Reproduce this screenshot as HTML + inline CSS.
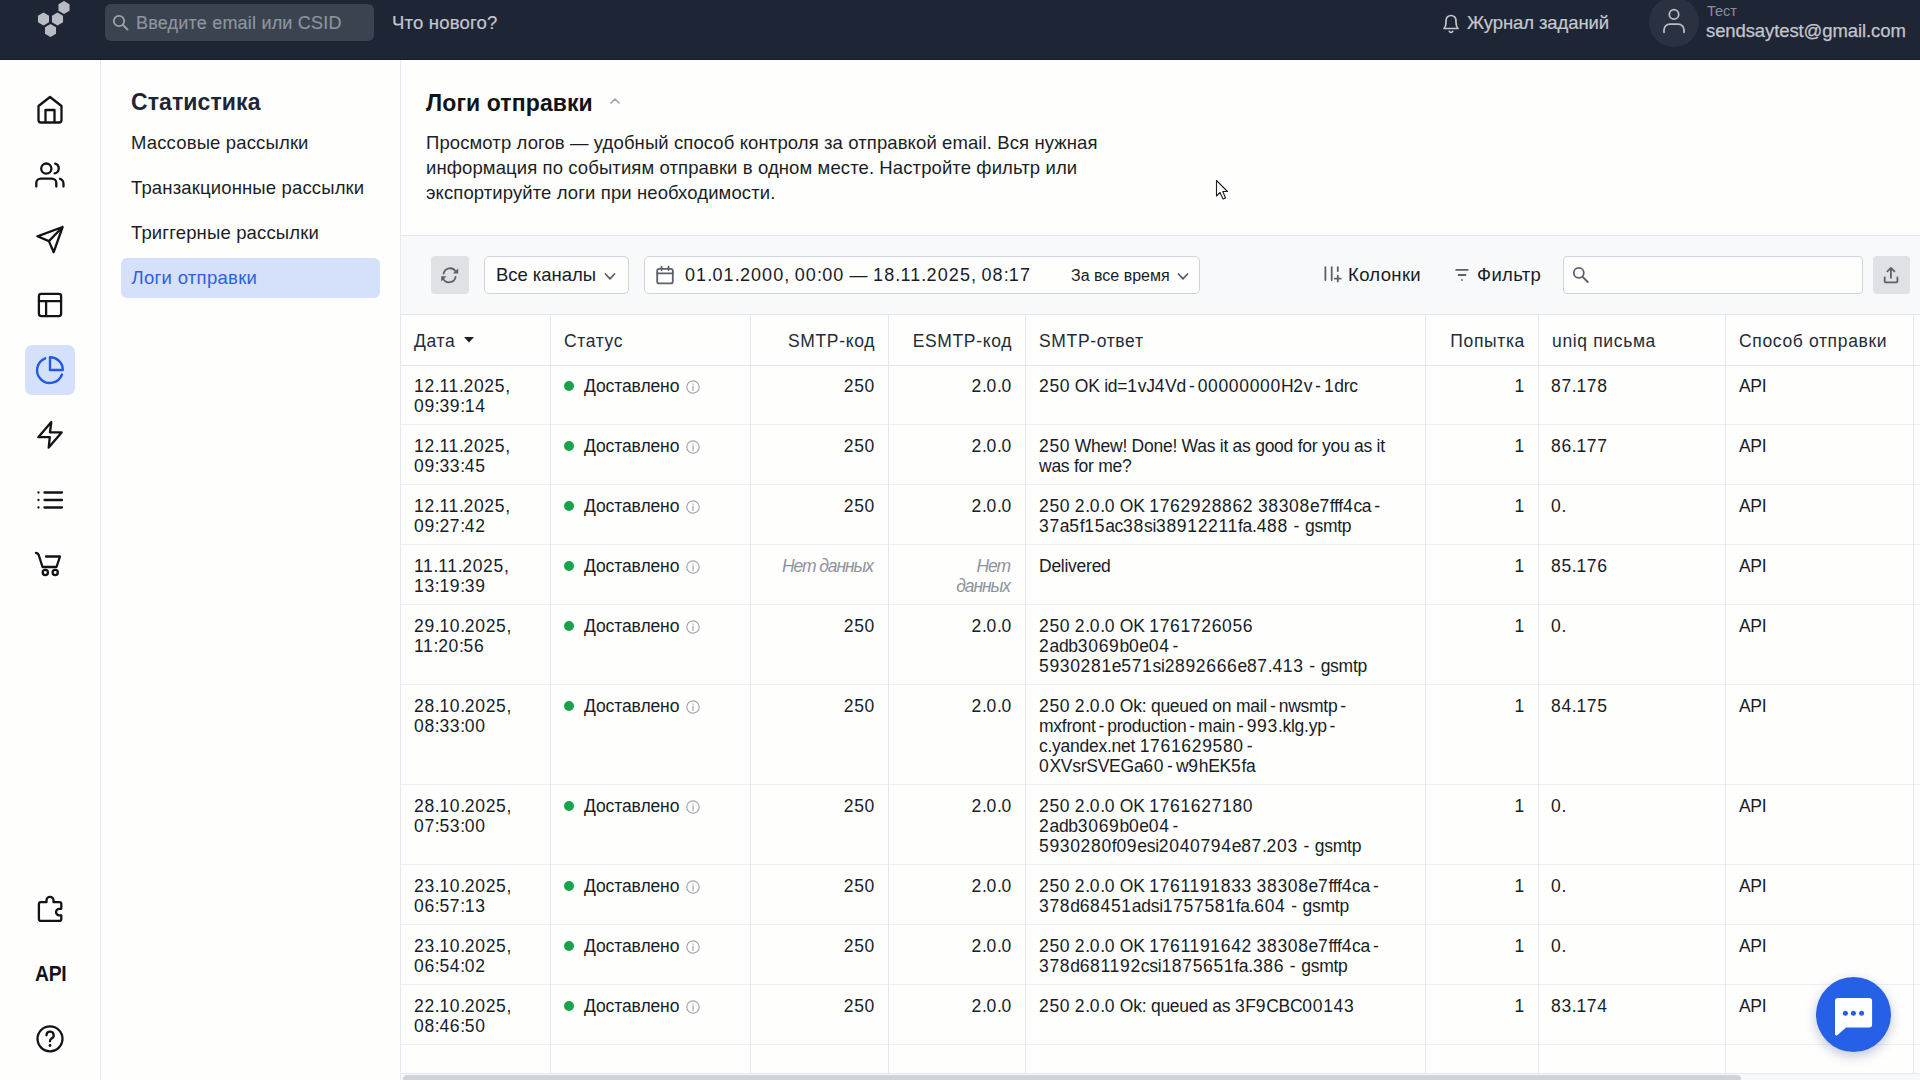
<!DOCTYPE html><html><head><meta charset="utf-8"><style>
*{box-sizing:border-box;margin:0;padding:0}
html,body{width:1920px;height:1080px;overflow:hidden;background:#fefefd;font-family:"Liberation Sans", sans-serif;color:#1b1e25}
.a{position:absolute}
.t{position:absolute;white-space:nowrap}
#top{left:0;top:0;width:1920px;height:60px;background:#1e2535}
#top .bl{left:0;top:59px;width:1920px;height:1px;background:#141b2b}
#srch{left:105px;top:4px;width:269px;height:37px;background:#3a4350;border-radius:6px}
.tb{font-size:18.5px;color:#c5c8ce;letter-spacing:0.2px;-webkit-text-stroke:0.2px currentColor}
#side{left:0;top:60px;width:101px;height:1020px;border-right:1px solid #e8e9f0}
#sub{left:101px;top:60px;width:300px;height:1020px;border-right:1px solid #e8e9f0}
.sm{font-size:18.5px;color:#1b1e25;letter-spacing:0.15px}
#band{left:401px;top:235px;width:1519px;height:80px;background:#f8f9fb;border-top:1px solid #e6e7ee;border-bottom:1px solid #e6e7ee}
.box{position:absolute;background:#fefefd;border:1px solid #cfd3da;border-radius:5px}
.td{font-size:17.5px;letter-spacing:0.35px;line-height:20px;color:#181c25}
.dt{letter-spacing:-0.26px}
.d{letter-spacing:0.67px}
.hy{margin:0 2.95px;letter-spacing:0}
.dtr{letter-spacing:0.2px}
.dtr .d{letter-spacing:1.1px}
.th{color:#222c38;letter-spacing:0.65px}
.r{text-align:right}
.vl{position:absolute;width:1px;background:#e6e7ee}
.hl{position:absolute;height:1px;background:#eeeff3}
</style></head><body>
<div id="top" class="a"><div class="a bl"></div>
<svg class="a" style="left:0;top:0" width="120" height="60" viewBox="0 0 120 60">
<path d="M64.00,13.90 L58.46,10.70 L58.46,4.30 L64.00,1.10 L69.54,4.30 L69.54,10.70Z" fill="#b9bcc3"/>
<path d="M43.50,25.40 L37.96,22.20 L37.96,15.80 L43.50,12.60 L49.04,15.80 L49.04,22.20Z" fill="#b9bcc3"/>
<path d="M57.50,25.40 L51.96,22.20 L51.96,15.80 L57.50,12.60 L63.04,15.80 L63.04,22.20Z" fill="#b9bcc3"/>
<path d="M50.50,36.90 L44.96,33.70 L44.96,27.30 L50.50,24.10 L56.04,27.30 L56.04,33.70Z" fill="#b9bcc3"/>
</svg>
<div id="srch" class="a"></div>
<svg class="a" style="left:111px;top:13px" width="20" height="20" viewBox="0 0 20 20"><circle cx="8" cy="8" r="5.2" fill="none" stroke="#9ba1aa" stroke-width="1.8"/><path d="M12 12L16.5 16.5" stroke="#9ba1aa" stroke-width="1.8" stroke-linecap="round"/></svg>
<div class="t tb" style="left:136px;top:12.5px;color:#8e939c;font-size:18px">Введите email или CSID</div>
<div class="t tb" style="left:392px;top:12.2px">Что нового?</div>
<svg class="a" style="left:1440px;top:11px" width="22" height="24" viewBox="0 0 22 24"><path d="M4 17.5 H18 C16.2 15.8 16 14 16 11.5 V9.5 A5 5 0 0 0 6 9.5 V11.5 C6 14 5.8 15.8 4 17.5Z" fill="none" stroke="#c4c7cd" stroke-width="1.7" stroke-linejoin="round"/><path d="M9.3 20.3 A1.8 1.8 0 0 0 12.7 20.3" fill="none" stroke="#c4c7cd" stroke-width="1.7" stroke-linecap="round"/></svg>
<div class="t tb" style="left:1467px;top:12px;letter-spacing:-0.1px">Журнал заданий</div>
<div class="a" style="left:1649px;top:-3px;width:50px;height:50px;border-radius:50%;background:#2a3241"></div>
<svg class="a" style="left:1660px;top:6px" width="28" height="30" viewBox="0 0 28 30"><circle cx="14" cy="8.4" r="4.7" fill="none" stroke="#babec6" stroke-width="1.75"/><path d="M4 26.3 V24 A5.8 5.8 0 0 1 9.8 18.2 H18.2 A5.8 5.8 0 0 1 24 24 V26.3" fill="none" stroke="#babec6" stroke-width="1.75" stroke-linecap="round"/></svg>
<div class="t" style="left:1707px;top:3px;font-size:14.5px;color:#8a8f99">Тест</div>
<div class="t" style="left:1706px;top:19.5px;font-size:18.5px;color:#c3c6cd;letter-spacing:-0.1px;-webkit-text-stroke:0.25px currentColor">sendsaytest@gmail.com</div>
</div>
<div id="side" class="a"></div>
<div class="a" style="left:25px;top:345px;width:50px;height:50px;border-radius:7px;background:#d5e1fb"></div>
<svg class="a" style="left:0;top:0" width="100" height="1080" viewBox="0 0 100 1080">
<path fill="none" stroke="#111317" stroke-width="2.3" stroke-linecap="round" stroke-linejoin="round" d="M38.5 106 L50 97 L61.5 106 V120 A2.5 2.5 0 0 1 59 122.5 H41 A2.5 2.5 0 0 1 38.5 120 Z M45.5 122.5 V110 H54.5 V122.5"/>
<circle fill="none" stroke="#111317" stroke-width="2.3" stroke-linecap="round" stroke-linejoin="round" cx="46.3" cy="168.6" r="5.1"/>
<path fill="none" stroke="#111317" stroke-width="2.3" stroke-linecap="round" stroke-linejoin="round" d="M36.3 186.5 V183 A4.5 4.5 0 0 1 40.8 178.6 H51.8 A4.5 4.5 0 0 1 56.3 183 V186.5"/>
<path fill="none" stroke="#111317" stroke-width="2.3" stroke-linecap="round" stroke-linejoin="round" d="M55.2 163.7 A5 5 0 0 1 54.6 173.4"/>
<path fill="none" stroke="#111317" stroke-width="2.3" stroke-linecap="round" stroke-linejoin="round" d="M63.5 186.5 V184 A5.5 5.5 0 0 0 60 178.8"/>
<path fill="none" stroke="#111317" stroke-width="2.3" stroke-linecap="round" stroke-linejoin="round" d="M37.4 236.3 L62.6 227 L53.7 252.2 L48.9 241.1 Z M48.9 241.1 L62.6 227"/>
<rect fill="none" stroke="#111317" stroke-width="2.3" stroke-linecap="round" stroke-linejoin="round" x="38.9" y="293.9" width="22.2" height="22.2" rx="2.3"/>
<path fill="none" stroke="#111317" stroke-width="2.3" stroke-linecap="round" stroke-linejoin="round" d="M38.9 301.1 H61.1 M46.1 301.1 V316.1"/>
<path fill="none" stroke="#1f5ae6" stroke-width="2.4" stroke-linecap="round" stroke-linejoin="round" d="M45.2 358.3 A12.8 12.8 0 1 0 61.9 374.6"/>
<path fill="none" stroke="#1f5ae6" stroke-width="2.4" stroke-linecap="round" stroke-linejoin="round" stroke-linejoin="miter" d="M50 357.2 A12.8 12.8 0 0 1 62.8 370 H50 Z"/>
<path fill="none" stroke="#111317" stroke-width="2.3" stroke-linecap="round" stroke-linejoin="round" d="M51.3 422 L38.3 437.2 H49.8 L48.7 447.6 L61.6 432.4 H50 Z"/>
<path fill="none" stroke="#111317" stroke-width="2.3" stroke-linecap="round" stroke-linejoin="round" d="M44.5 492.5 H62 M44.5 500 H62 M44.5 507.5 H62 M38.5 492.5 V492.6 M38.5 500 V500.1 M38.5 507.5 V507.6"/>
<path fill="none" stroke="#111317" stroke-width="2.3" stroke-linecap="round" stroke-linejoin="round" d="M36 553 Q38 553 38.7 555 L42.5 567 H56.5 L60 556.5 H46"/>
<circle fill="none" stroke="#111317" stroke-width="2.3" stroke-linecap="round" stroke-linejoin="round" cx="45.3" cy="572.5" r="2.6"/><circle fill="none" stroke="#111317" stroke-width="2.3" stroke-linecap="round" stroke-linejoin="round" cx="55.2" cy="572.5" r="2.6"/>
<path fill="none" stroke="#111317" stroke-width="2.3" stroke-linecap="round" stroke-linejoin="round" d="M38.9 904 A1.8 1.8 0 0 1 40.7 902.2 H46.5 V900.3 A3.5 3.5 0 0 1 53.5 900.3 V902.2 H59.5 A1.8 1.8 0 0 1 61.3 904 V908.8 H59.3 A3.3 3.3 0 0 0 59.3 915.4 H61.3 V919.1 A1.8 1.8 0 0 1 59.5 920.9 H40.7 A1.8 1.8 0 0 1 38.9 919.1 Z"/>
<circle fill="none" stroke="#111317" stroke-width="2.3" stroke-linecap="round" stroke-linejoin="round" cx="50" cy="1038.8" r="12.5"/>
<path fill="none" stroke="#111317" stroke-width="2.3" stroke-linecap="round" stroke-linejoin="round" d="M46.5 1035.3 A3.6 3.6 0 1 1 51.3 1038.6 Q50 1039.5 50 1041.3"/>
<circle cx="50" cy="1045.5" r="1.4" fill="#111317"/>
</svg>
<div class="t" style="left:35px;top:961px;font-size:22.5px;font-weight:700;color:#111317;letter-spacing:-0.3px;transform:scaleX(0.86);transform-origin:0 0">API</div>
<div id="sub" class="a"></div>
<div class="t" style="left:131px;top:88.5px;font-size:23px;font-weight:700;color:#1e2535;letter-spacing:0.1px">Статистика</div>
<div class="t sm" style="left:131px;top:132px">Массовые рассылки</div>
<div class="t sm" style="left:131px;top:177px">Транзакционные рассылки</div>
<div class="t sm" style="left:131px;top:222px">Триггерные рассылки</div>
<div class="a" style="left:121px;top:258px;width:259px;height:40px;border-radius:6px;background:#d5e1fb"></div>
<div class="t sm" style="left:131.5px;top:267px;color:#2c60df;letter-spacing:0.3px">Логи отправки</div>
<div class="t" style="left:426px;top:89.5px;font-size:23px;font-weight:700;color:#111317;letter-spacing:0.1px">Логи отправки</div>
<svg class="a" style="left:608px;top:95.5px" width="14" height="10" viewBox="0 0 14 10"><path d="M3 7 L7 3 L11 7" fill="none" stroke="#9ca0a8" stroke-width="1.6" stroke-linecap="round" stroke-linejoin="round"/></svg>
<div class="t" style="left:426px;top:132px;font-size:18.5px;color:#1b1e25;letter-spacing:0.1px">Просмотр логов — удобный способ контроля за отправкой email. Вся нужная</div>
<div class="t" style="left:426px;top:157px;font-size:18.5px;color:#1b1e25;letter-spacing:0.1px">информация по событиям отправки в одном месте. Настройте фильтр или</div>
<div class="t" style="left:426px;top:182px;font-size:18.5px;color:#1b1e25;letter-spacing:0.1px">экспортируйте логи при необходимости.</div>
<div id="band" class="a"></div>
<div class="a" style="left:431px;top:256px;width:38px;height:38px;border-radius:4px;background:#dfe1e5"></div>
<svg class="a" style="left:436px;top:261px" width="28" height="28" viewBox="436 261 28 28"><path fill="none" stroke="#5b616b" stroke-width="1.8" stroke-linecap="round" stroke-linejoin="round" stroke-width="1.6" d="M443.6 273.6 A6.6 6.6 0 0 1 455.8 271.6 M455.6 276.9 A6.6 6.6 0 0 1 443.2 278.6"/><path fill="#5b616b" d="M458.2 268.3 V273.6 H452.9 Z M441.2 281.6 V276.3 H446.5 Z"/></svg>
<div class="box" style="left:484px;top:256px;width:145px;height:38px"></div>
<div class="t td" style="left:496px;top:265px;font-size:18.5px;line-height:20px;letter-spacing:-0.05px">Все каналы</div>
<svg class="a" style="left:603px;top:270.5px" width="16" height="12" viewBox="603 270.5 16 12"><path fill="none" stroke="#5b616b" stroke-width="1.8" stroke-linecap="round" stroke-linejoin="round" d="M605.5 273.5 L610 278.3 L614.5 273.5"/></svg>
<div class="box" style="left:644px;top:256px;width:556px;height:38px"></div>
<svg class="a" style="left:652px;top:262px" width="26" height="26" viewBox="652 262 26 26"><rect fill="none" stroke="#5b616b" stroke-width="1.8" stroke-linecap="round" stroke-linejoin="round" stroke-width="1.7" x="657.2" y="268.8" width="15.6" height="14.6" rx="2"/><path fill="none" stroke="#5b616b" stroke-width="1.8" stroke-linecap="round" stroke-linejoin="round" stroke-width="1.7" d="M657.2 273.3 H672.8 M661.5 266.6 V270 M668.5 266.6 V270"/></svg>
<div class="t td dtr" style="left:685px;top:265px;font-size:18px"><span class="d">01</span>.<span class="d">01</span>.<span class="d">2000</span>, <span class="d">00</span>:<span class="d">00</span> — <span class="d">18</span>.<span class="d">11</span>.<span class="d">2025</span>, <span class="d">08</span>:<span class="d">17</span></div>
<div class="t td" style="left:1071px;top:265.5px;font-size:16px;letter-spacing:0px">За все время</div>
<svg class="a" style="left:1176px;top:270.5px" width="16" height="12" viewBox="1176 270.5 16 12"><path fill="none" stroke="#5b616b" stroke-width="1.8" stroke-linecap="round" stroke-linejoin="round" d="M1178.5 273.5 L1183 278.3 L1187.5 273.5"/></svg>
<svg class="a" style="left:1318px;top:262px" width="28" height="26" viewBox="1318 262 28 26"><path fill="none" stroke="#5b616b" stroke-width="1.8" stroke-linecap="round" stroke-linejoin="round" stroke-width="2.4" d="M1325.4 267.2 V280 M1331.7 267.2 V280 M1337.8 267.2 V271 M1337.8 275.6 V281.6 M1334.8 278.6 H1340.8"/></svg>
<div class="t td" style="left:1348px;top:265px;font-size:18.5px">Колонки</div>
<svg class="a" style="left:1450px;top:262px" width="24" height="24" viewBox="1450 262 24 24"><path fill="none" stroke="#5b616b" stroke-width="1.8" stroke-linecap="round" stroke-linejoin="round" stroke-width="2" d="M1456.2 269.9 H1467.7 M1458.6 275 H1465.5 M1462 279.9 V280"/></svg>
<div class="t td" style="left:1477px;top:265px;font-size:18.5px">Фильтр</div>
<div class="box" style="left:1563px;top:256px;width:300px;height:38px;border-color:#cfd3da;border-radius:4px"></div>
<svg class="a" style="left:1568px;top:262px" width="26" height="26" viewBox="1568 262 26 26"><circle fill="none" stroke="#5b616b" stroke-width="1.8" stroke-linecap="round" stroke-linejoin="round" cx="1578.8" cy="272.9" r="5"/><path fill="none" stroke="#5b616b" stroke-width="1.8" stroke-linecap="round" stroke-linejoin="round" d="M1582.7 277 L1587.8 282"/></svg>
<div class="a" style="left:1873px;top:256px;width:37px;height:38px;border-radius:4px;background:#dfe1e5"></div>
<svg class="a" style="left:1878px;top:262px" width="26" height="26" viewBox="1878 262 26 26"><path fill="none" stroke="#5b616b" stroke-width="1.8" stroke-linecap="round" stroke-linejoin="round" d="M1884.7 277.3 V281.2 A1.2 1.2 0 0 0 1885.9 282.4 H1896.2 A1.2 1.2 0 0 0 1897.4 281.2 V277.3 M1890.9 277.8 V268.2 M1887.4 271.4 L1890.9 267.9 L1894.4 271.4"/></svg>
<div class="hl" style="left:401px;top:365px;width:1519px;background:#e3e4eb"></div>
<div class="hl" style="left:401px;top:424px;width:1519px;background:#eeeff3"></div>
<div class="hl" style="left:401px;top:484px;width:1519px;background:#eeeff3"></div>
<div class="hl" style="left:401px;top:544px;width:1519px;background:#eeeff3"></div>
<div class="hl" style="left:401px;top:604px;width:1519px;background:#eeeff3"></div>
<div class="hl" style="left:401px;top:684px;width:1519px;background:#eeeff3"></div>
<div class="hl" style="left:401px;top:784px;width:1519px;background:#eeeff3"></div>
<div class="hl" style="left:401px;top:864px;width:1519px;background:#eeeff3"></div>
<div class="hl" style="left:401px;top:924px;width:1519px;background:#eeeff3"></div>
<div class="hl" style="left:401px;top:984px;width:1519px;background:#eeeff3"></div>
<div class="hl" style="left:401px;top:1044px;width:1519px;background:#eeeff3"></div>
<div class="vl" style="left:550px;top:315px;height:758px"></div>
<div class="vl" style="left:750px;top:315px;height:758px"></div>
<div class="vl" style="left:888px;top:315px;height:758px"></div>
<div class="vl" style="left:1025px;top:315px;height:758px"></div>
<div class="vl" style="left:1425px;top:315px;height:758px"></div>
<div class="vl" style="left:1538px;top:315px;height:758px"></div>
<div class="vl" style="left:1725px;top:315px;height:758px"></div>
<div class="vl" style="left:1913px;top:315px;height:758px"></div>
<div class="t td th" style="left:414px;top:331px">Дата</div>
<div class="t td th" style="left:564px;top:331px">Статус</div>
<div class="t td th r" style="left:750px;width:125px;top:331px">SMTP-код</div>
<div class="t td th r" style="left:888px;width:124px;top:331px">ESMTP-код</div>
<div class="t td th" style="left:1039px;top:331px">SMTP-ответ</div>
<div class="t td th r" style="left:1425px;width:100px;top:331px">Попытка</div>
<div class="t td th" style="left:1552px;top:331px">uniq письма</div>
<div class="t td th" style="left:1739px;top:331px">Способ отправки</div>
<svg class="a" style="left:463px;top:336px" width="12" height="8" viewBox="0 0 12 8"><path d="M1 1 H11 L6 6.5Z" fill="#1b1e25"/></svg>
<div class="t td dt" style="left:414px;top:376px"><span class="d">12</span>.<span class="d">11</span>.<span class="d">2025</span>,<br><span class="d">09</span>:<span class="d">39</span>:<span class="d">14</span></div>
<div class="a" style="left:564px;top:381px;width:10px;height:10px;border-radius:50%;background:#16a34a"></div>
<div class="t td" style="left:584px;top:376px;letter-spacing:-0.1px">Доставлено</div>
<svg class="a" style="left:684.8px;top:379px" width="16" height="16" viewBox="0 0 16 16"><circle cx="8" cy="8" r="6.2" fill="none" stroke="#a3a7ae" stroke-width="1.2"/><path d="M8 7.2 V11.3 M8 4.9 V5.2" stroke="#a3a7ae" stroke-width="1.3" stroke-linecap="round"/></svg>
<div class="t td dt r" style="left:750px;width:125px;top:376px"><span class="d">250</span></div>
<div class="t td dt r" style="left:888px;width:124px;top:376px"><span class="d">2</span>.<span class="d">0</span>.<span class="d">0</span></div>
<div class="t td dt" style="left:1039px;top:376px"><span class="d">250</span> OK id=<span class="d">1</span>vJ<span class="d">4</span>Vd<span class="hy">-</span><span class="d">00000000</span>H<span class="d">2</span>v<span class="hy">-</span><span class="d">1</span>drc</div>
<div class="t td dt r" style="left:1425px;width:100px;top:376px"><span class="d">1</span></div>
<div class="t td dt" style="left:1551px;top:376px"><span class="d">87</span>.<span class="d">178</span></div>
<div class="t td" style="left:1739px;top:376px;letter-spacing:-0.3px">API</div>
<div class="t td dt" style="left:414px;top:436px"><span class="d">12</span>.<span class="d">11</span>.<span class="d">2025</span>,<br><span class="d">09</span>:<span class="d">33</span>:<span class="d">45</span></div>
<div class="a" style="left:564px;top:441px;width:10px;height:10px;border-radius:50%;background:#16a34a"></div>
<div class="t td" style="left:584px;top:436px;letter-spacing:-0.1px">Доставлено</div>
<svg class="a" style="left:684.8px;top:439px" width="16" height="16" viewBox="0 0 16 16"><circle cx="8" cy="8" r="6.2" fill="none" stroke="#a3a7ae" stroke-width="1.2"/><path d="M8 7.2 V11.3 M8 4.9 V5.2" stroke="#a3a7ae" stroke-width="1.3" stroke-linecap="round"/></svg>
<div class="t td dt r" style="left:750px;width:125px;top:436px"><span class="d">250</span></div>
<div class="t td dt r" style="left:888px;width:124px;top:436px"><span class="d">2</span>.<span class="d">0</span>.<span class="d">0</span></div>
<div class="t td dt" style="left:1039px;top:436px"><span class="d">250</span> Whew! Done! Was it as good for you as it<br>was for me?</div>
<div class="t td dt r" style="left:1425px;width:100px;top:436px"><span class="d">1</span></div>
<div class="t td dt" style="left:1551px;top:436px"><span class="d">86</span>.<span class="d">177</span></div>
<div class="t td" style="left:1739px;top:436px;letter-spacing:-0.3px">API</div>
<div class="t td dt" style="left:414px;top:496px"><span class="d">12</span>.<span class="d">11</span>.<span class="d">2025</span>,<br><span class="d">09</span>:<span class="d">27</span>:<span class="d">42</span></div>
<div class="a" style="left:564px;top:501px;width:10px;height:10px;border-radius:50%;background:#16a34a"></div>
<div class="t td" style="left:584px;top:496px;letter-spacing:-0.1px">Доставлено</div>
<svg class="a" style="left:684.8px;top:499px" width="16" height="16" viewBox="0 0 16 16"><circle cx="8" cy="8" r="6.2" fill="none" stroke="#a3a7ae" stroke-width="1.2"/><path d="M8 7.2 V11.3 M8 4.9 V5.2" stroke="#a3a7ae" stroke-width="1.3" stroke-linecap="round"/></svg>
<div class="t td dt r" style="left:750px;width:125px;top:496px"><span class="d">250</span></div>
<div class="t td dt r" style="left:888px;width:124px;top:496px"><span class="d">2</span>.<span class="d">0</span>.<span class="d">0</span></div>
<div class="t td dt" style="left:1039px;top:496px"><span class="d">250</span> <span class="d">2</span>.<span class="d">0</span>.<span class="d">0</span> OK <span class="d">1762928862</span> <span class="d">38308</span>e<span class="d">7</span>fff<span class="d">4</span>ca<span class="hy">-</span><br><span class="d">37</span>a<span class="d">5</span>f<span class="d">15</span>ac<span class="d">38</span>si<span class="d">38912211</span>fa.<span class="d">488</span> <span class="hy" style="margin:0 1px">-</span> gsmtp</div>
<div class="t td dt r" style="left:1425px;width:100px;top:496px"><span class="d">1</span></div>
<div class="t td dt" style="left:1551px;top:496px"><span class="d">0</span>.</div>
<div class="t td" style="left:1739px;top:496px;letter-spacing:-0.3px">API</div>
<div class="t td dt" style="left:414px;top:556px"><span class="d">11</span>.<span class="d">11</span>.<span class="d">2025</span>,<br><span class="d">13</span>:<span class="d">19</span>:<span class="d">39</span></div>
<div class="a" style="left:564px;top:561px;width:10px;height:10px;border-radius:50%;background:#16a34a"></div>
<div class="t td" style="left:584px;top:556px;letter-spacing:-0.1px">Доставлено</div>
<svg class="a" style="left:684.8px;top:559px" width="16" height="16" viewBox="0 0 16 16"><circle cx="8" cy="8" r="6.2" fill="none" stroke="#a3a7ae" stroke-width="1.2"/><path d="M8 7.2 V11.3 M8 4.9 V5.2" stroke="#a3a7ae" stroke-width="1.3" stroke-linecap="round"/></svg>
<div class="t td r" style="left:750px;width:122px;top:556px;font-style:italic;color:#8e939b;letter-spacing:-1.1px;margin-left:1px">Нет данных</div>
<div class="t td r" style="left:888px;width:121px;top:556px;font-style:italic;color:#8e939b;letter-spacing:-1.1px;margin-left:1px">Нет<br>данных</div>
<div class="t td dt" style="left:1039px;top:556px">Delivered</div>
<div class="t td dt r" style="left:1425px;width:100px;top:556px"><span class="d">1</span></div>
<div class="t td dt" style="left:1551px;top:556px"><span class="d">85</span>.<span class="d">176</span></div>
<div class="t td" style="left:1739px;top:556px;letter-spacing:-0.3px">API</div>
<div class="t td dt" style="left:414px;top:616px"><span class="d">29</span>.<span class="d">10</span>.<span class="d">2025</span>,<br><span class="d">11</span>:<span class="d">20</span>:<span class="d">56</span></div>
<div class="a" style="left:564px;top:621px;width:10px;height:10px;border-radius:50%;background:#16a34a"></div>
<div class="t td" style="left:584px;top:616px;letter-spacing:-0.1px">Доставлено</div>
<svg class="a" style="left:684.8px;top:619px" width="16" height="16" viewBox="0 0 16 16"><circle cx="8" cy="8" r="6.2" fill="none" stroke="#a3a7ae" stroke-width="1.2"/><path d="M8 7.2 V11.3 M8 4.9 V5.2" stroke="#a3a7ae" stroke-width="1.3" stroke-linecap="round"/></svg>
<div class="t td dt r" style="left:750px;width:125px;top:616px"><span class="d">250</span></div>
<div class="t td dt r" style="left:888px;width:124px;top:616px"><span class="d">2</span>.<span class="d">0</span>.<span class="d">0</span></div>
<div class="t td dt" style="left:1039px;top:616px"><span class="d">250</span> <span class="d">2</span>.<span class="d">0</span>.<span class="d">0</span> OK <span class="d">1761726056</span><br><span class="d">2</span>adb<span class="d">3069</span>b<span class="d">0</span>e<span class="d">04</span><span class="hy">-</span><br><span class="d">5930281</span>e<span class="d">571</span>si<span class="d">2892666</span>e<span class="d">87</span>.<span class="d">413</span> <span class="hy" style="margin:0 1px">-</span> gsmtp</div>
<div class="t td dt r" style="left:1425px;width:100px;top:616px"><span class="d">1</span></div>
<div class="t td dt" style="left:1551px;top:616px"><span class="d">0</span>.</div>
<div class="t td" style="left:1739px;top:616px;letter-spacing:-0.3px">API</div>
<div class="t td dt" style="left:414px;top:696px"><span class="d">28</span>.<span class="d">10</span>.<span class="d">2025</span>,<br><span class="d">08</span>:<span class="d">33</span>:<span class="d">00</span></div>
<div class="a" style="left:564px;top:701px;width:10px;height:10px;border-radius:50%;background:#16a34a"></div>
<div class="t td" style="left:584px;top:696px;letter-spacing:-0.1px">Доставлено</div>
<svg class="a" style="left:684.8px;top:699px" width="16" height="16" viewBox="0 0 16 16"><circle cx="8" cy="8" r="6.2" fill="none" stroke="#a3a7ae" stroke-width="1.2"/><path d="M8 7.2 V11.3 M8 4.9 V5.2" stroke="#a3a7ae" stroke-width="1.3" stroke-linecap="round"/></svg>
<div class="t td dt r" style="left:750px;width:125px;top:696px"><span class="d">250</span></div>
<div class="t td dt r" style="left:888px;width:124px;top:696px"><span class="d">2</span>.<span class="d">0</span>.<span class="d">0</span></div>
<div class="t td dt" style="left:1039px;top:696px"><span class="d">250</span> <span class="d">2</span>.<span class="d">0</span>.<span class="d">0</span> Ok: queued on mail<span class="hy">-</span>nwsmtp<span class="hy">-</span><br>mxfront<span class="hy">-</span>production<span class="hy">-</span>main<span class="hy">-</span><span class="d">993</span>.klg.yp<span class="hy">-</span><br>c.yandex.net <span class="d">1761629580</span><span class="hy">-</span><br><span class="d">0</span>XVsrSVEGa<span class="d">60</span><span class="hy">-</span>w<span class="d">9</span>hEK<span class="d">5</span>fa</div>
<div class="t td dt r" style="left:1425px;width:100px;top:696px"><span class="d">1</span></div>
<div class="t td dt" style="left:1551px;top:696px"><span class="d">84</span>.<span class="d">175</span></div>
<div class="t td" style="left:1739px;top:696px;letter-spacing:-0.3px">API</div>
<div class="t td dt" style="left:414px;top:796px"><span class="d">28</span>.<span class="d">10</span>.<span class="d">2025</span>,<br><span class="d">07</span>:<span class="d">53</span>:<span class="d">00</span></div>
<div class="a" style="left:564px;top:801px;width:10px;height:10px;border-radius:50%;background:#16a34a"></div>
<div class="t td" style="left:584px;top:796px;letter-spacing:-0.1px">Доставлено</div>
<svg class="a" style="left:684.8px;top:799px" width="16" height="16" viewBox="0 0 16 16"><circle cx="8" cy="8" r="6.2" fill="none" stroke="#a3a7ae" stroke-width="1.2"/><path d="M8 7.2 V11.3 M8 4.9 V5.2" stroke="#a3a7ae" stroke-width="1.3" stroke-linecap="round"/></svg>
<div class="t td dt r" style="left:750px;width:125px;top:796px"><span class="d">250</span></div>
<div class="t td dt r" style="left:888px;width:124px;top:796px"><span class="d">2</span>.<span class="d">0</span>.<span class="d">0</span></div>
<div class="t td dt" style="left:1039px;top:796px"><span class="d">250</span> <span class="d">2</span>.<span class="d">0</span>.<span class="d">0</span> OK <span class="d">1761627180</span><br><span class="d">2</span>adb<span class="d">3069</span>b<span class="d">0</span>e<span class="d">04</span><span class="hy">-</span><br><span class="d">5930280</span>f<span class="d">09</span>esi<span class="d">2040794</span>e<span class="d">87</span>.<span class="d">203</span> <span class="hy" style="margin:0 1px">-</span> gsmtp</div>
<div class="t td dt r" style="left:1425px;width:100px;top:796px"><span class="d">1</span></div>
<div class="t td dt" style="left:1551px;top:796px"><span class="d">0</span>.</div>
<div class="t td" style="left:1739px;top:796px;letter-spacing:-0.3px">API</div>
<div class="t td dt" style="left:414px;top:876px"><span class="d">23</span>.<span class="d">10</span>.<span class="d">2025</span>,<br><span class="d">06</span>:<span class="d">57</span>:<span class="d">13</span></div>
<div class="a" style="left:564px;top:881px;width:10px;height:10px;border-radius:50%;background:#16a34a"></div>
<div class="t td" style="left:584px;top:876px;letter-spacing:-0.1px">Доставлено</div>
<svg class="a" style="left:684.8px;top:879px" width="16" height="16" viewBox="0 0 16 16"><circle cx="8" cy="8" r="6.2" fill="none" stroke="#a3a7ae" stroke-width="1.2"/><path d="M8 7.2 V11.3 M8 4.9 V5.2" stroke="#a3a7ae" stroke-width="1.3" stroke-linecap="round"/></svg>
<div class="t td dt r" style="left:750px;width:125px;top:876px"><span class="d">250</span></div>
<div class="t td dt r" style="left:888px;width:124px;top:876px"><span class="d">2</span>.<span class="d">0</span>.<span class="d">0</span></div>
<div class="t td dt" style="left:1039px;top:876px"><span class="d">250</span> <span class="d">2</span>.<span class="d">0</span>.<span class="d">0</span> OK <span class="d">1761191833</span> <span class="d">38308</span>e<span class="d">7</span>fff<span class="d">4</span>ca<span class="hy">-</span><br><span class="d">378</span>d<span class="d">68451</span>adsi<span class="d">1757581</span>fa.<span class="d">604</span> <span class="hy" style="margin:0 1px">-</span> gsmtp</div>
<div class="t td dt r" style="left:1425px;width:100px;top:876px"><span class="d">1</span></div>
<div class="t td dt" style="left:1551px;top:876px"><span class="d">0</span>.</div>
<div class="t td" style="left:1739px;top:876px;letter-spacing:-0.3px">API</div>
<div class="t td dt" style="left:414px;top:936px"><span class="d">23</span>.<span class="d">10</span>.<span class="d">2025</span>,<br><span class="d">06</span>:<span class="d">54</span>:<span class="d">02</span></div>
<div class="a" style="left:564px;top:941px;width:10px;height:10px;border-radius:50%;background:#16a34a"></div>
<div class="t td" style="left:584px;top:936px;letter-spacing:-0.1px">Доставлено</div>
<svg class="a" style="left:684.8px;top:939px" width="16" height="16" viewBox="0 0 16 16"><circle cx="8" cy="8" r="6.2" fill="none" stroke="#a3a7ae" stroke-width="1.2"/><path d="M8 7.2 V11.3 M8 4.9 V5.2" stroke="#a3a7ae" stroke-width="1.3" stroke-linecap="round"/></svg>
<div class="t td dt r" style="left:750px;width:125px;top:936px"><span class="d">250</span></div>
<div class="t td dt r" style="left:888px;width:124px;top:936px"><span class="d">2</span>.<span class="d">0</span>.<span class="d">0</span></div>
<div class="t td dt" style="left:1039px;top:936px"><span class="d">250</span> <span class="d">2</span>.<span class="d">0</span>.<span class="d">0</span> OK <span class="d">1761191642</span> <span class="d">38308</span>e<span class="d">7</span>fff<span class="d">4</span>ca<span class="hy">-</span><br><span class="d">378</span>d<span class="d">681192</span>csi<span class="d">1875651</span>fa.<span class="d">386</span> <span class="hy" style="margin:0 1px">-</span> gsmtp</div>
<div class="t td dt r" style="left:1425px;width:100px;top:936px"><span class="d">1</span></div>
<div class="t td dt" style="left:1551px;top:936px"><span class="d">0</span>.</div>
<div class="t td" style="left:1739px;top:936px;letter-spacing:-0.3px">API</div>
<div class="t td dt" style="left:414px;top:996px"><span class="d">22</span>.<span class="d">10</span>.<span class="d">2025</span>,<br><span class="d">08</span>:<span class="d">46</span>:<span class="d">50</span></div>
<div class="a" style="left:564px;top:1001px;width:10px;height:10px;border-radius:50%;background:#16a34a"></div>
<div class="t td" style="left:584px;top:996px;letter-spacing:-0.1px">Доставлено</div>
<svg class="a" style="left:684.8px;top:999px" width="16" height="16" viewBox="0 0 16 16"><circle cx="8" cy="8" r="6.2" fill="none" stroke="#a3a7ae" stroke-width="1.2"/><path d="M8 7.2 V11.3 M8 4.9 V5.2" stroke="#a3a7ae" stroke-width="1.3" stroke-linecap="round"/></svg>
<div class="t td dt r" style="left:750px;width:125px;top:996px"><span class="d">250</span></div>
<div class="t td dt r" style="left:888px;width:124px;top:996px"><span class="d">2</span>.<span class="d">0</span>.<span class="d">0</span></div>
<div class="t td dt" style="left:1039px;top:996px"><span class="d">250</span> <span class="d">2</span>.<span class="d">0</span>.<span class="d">0</span> Ok: queued as <span class="d">3</span>F<span class="d">9</span>CBC<span class="d">00143</span></div>
<div class="t td dt r" style="left:1425px;width:100px;top:996px"><span class="d">1</span></div>
<div class="t td dt" style="left:1551px;top:996px"><span class="d">83</span>.<span class="d">174</span></div>
<div class="t td" style="left:1739px;top:996px;letter-spacing:-0.3px">API</div>
<div class="a" style="left:401px;top:1073px;width:1519px;height:1px;background:#e6e8ec"></div>
<div class="a" style="left:401px;top:1074px;width:1519px;height:6px;background:#f7f8fa"></div>
<div class="a" style="left:403px;top:1075px;width:1338px;height:9px;border-radius:4px;background:#d0d3d9"></div>
<div class="a" style="left:1816px;top:977px;width:75px;height:75px;border-radius:50%;background:#2660e6;box-shadow:0 4px 12px rgba(30,50,120,0.28)"></div>
<svg class="a" style="left:1830px;top:992px" width="48" height="48" viewBox="1830 992 48 48"><path d="M1835 1001 A3 3 0 0 1 1838 998 H1869.1 A3 3 0 0 1 1872.1 1001 V1024.5 A3 3 0 0 1 1869.1 1027.5 H1846 L1837.6 1035 Q1835 1036.5 1835 1033.5 Z" fill="#fff"/><circle cx="1845.4" cy="1013.3" r="2.5" fill="#2660e6"/><circle cx="1853.4" cy="1013.3" r="2.5" fill="#2660e6"/><circle cx="1861.6" cy="1013.3" r="2.5" fill="#2660e6"/></svg>
<svg class="a" style="left:1215px;top:179px" width="16" height="22" viewBox="0 0 16 22"><path d="M1.5 1.5 V17 L5 13.5 L8 20 L10.5 19 L7.8 12.5 H12.5 Z" fill="#fff" stroke="#1b1e25" stroke-width="1.1" stroke-linejoin="round"/></svg>
</body></html>
